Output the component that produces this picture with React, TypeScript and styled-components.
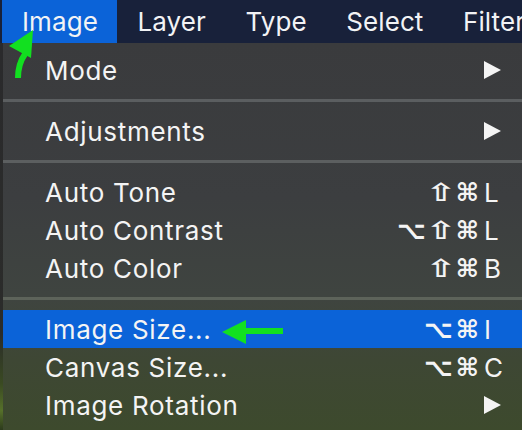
import React from "react";
import styled, { createGlobalStyle } from "styled-components";

const GlobalStyle = createGlobalStyle`
  html, body { margin: 0; padding: 0; background: #2a2a2a; }
  body { font-family: Inter, "Liberation Sans", sans-serif; }
`;

const Screen = styled.div`
  position: relative;
  width: 522px;
  height: 430px;
  overflow: hidden;
  display: flex;
  flex-direction: column;
  font-family: Inter, "Liberation Sans", sans-serif;
  color: #f4f4f4;
`;

const MenuBar = styled.div`
  height: 43px;
  flex: none;
  display: flex;
  padding-left: 2px;
  background: #18213a;
`;

const BarItem = styled.div<{ $active?: boolean }>`
  padding: 0 19.5px 0 20px;
  line-height: 43px;
  font-size: 26px;
  letter-spacing: 0.1px;
  white-space: nowrap;
  color: #f2f3f5;
  background: ${(p) => (p.$active ? "#0b63d8" : "transparent")};
`;

const Body = styled.div`
  flex: 1;
  display: flex;
`;

const EdgeStrip = styled.div`
  width: 3px;
  flex: none;
  background: linear-gradient(#2a2a2c 0%, #2b2c2a 75%, #3a4a22 88%, #56702a 95%, #2c3a1c 100%);
`;

const Menu = styled.div`
  flex: 1;
  padding-top: 8px;
  background: linear-gradient(
    #3a3b3d 0%,
    #3c3e40 40%,
    #3f4440 65%,
    #3e4734 82%,
    #3d4a2d 100%
  );
`;

const Row = styled.div<{ $highlight?: boolean }>`
  height: 38px;
  display: flex;
  align-items: center;
  justify-content: space-between;
  padding: 0 16px 0 42px;
  font-size: 26px;
  white-space: nowrap;
  background: ${(p) => (p.$highlight ? "#0b63d8" : "transparent")};
`;

const Label = styled.span`
  color: #f4f4f4;
  letter-spacing: 0.7px;
`;

const Shortcut = styled.span`
  display: flex;
  align-items: center;
`;

const Mods = styled.span`
  display: flex;
  gap: 3px;
  font-family: "DejaVu Sans", sans-serif;
  font-weight: bold;
  font-size: 25px;
  margin-right: 5px;
`;

const Mod = styled.span<{ $wide?: boolean }>`
  display: inline-block;
  width: ${(p) => (p.$wide ? "24px" : "auto")};
  text-align: center;
  transform: ${(p) => (p.$wide ? "scaleX(1.45)" : "none")};
`;

const Key = styled.span`
  width: 22px;
  display: flex;
  align-items: center;
  font-size: 26px;
`;

const Separator = styled.div<{ $tint?: string }>`
  height: 3px;
  margin: 10px 0;
  background: ${(p) => p.$tint ?? "#5c5f60"};
`;

const Annotation = styled.svg`
  position: absolute;
  left: 0;
  top: 0;
  pointer-events: none;
`;

const Chevron = () => (
  <svg width="18" height="18" viewBox="0 0 18 18">
    <polygon points="0,0 17,9 0,18" fill="#f4f4f4" />
  </svg>
);

type Item = {
  label: string;
  mods?: string[];
  keyChar?: string;
  submenu?: boolean;
  highlight?: boolean;
};

const groups: { items: Item[]; tint?: string }[] = [
  { items: [{ label: "Mode", submenu: true }], tint: "#5b5e60" },
  { items: [{ label: "Adjustments", submenu: true }], tint: "#5c5f60" },
  {
    items: [
      { label: "Auto Tone", mods: ["⇧", "⌘"], keyChar: "L" },
      { label: "Auto Contrast", mods: ["⌥", "⇧", "⌘"], keyChar: "L" },
      { label: "Auto Color", mods: ["⇧", "⌘"], keyChar: "B" },
    ],
    tint: "#5d635a",
  },
  {
    items: [
      { label: "Image Size...", mods: ["⌥", "⌘"], keyChar: "I", highlight: true },
      { label: "Canvas Size...", mods: ["⌥", "⌘"], keyChar: "C" },
      { label: "Image Rotation", submenu: true },
    ],
  },
];

export default function App() {
  return (
    <>
      <GlobalStyle />
      <Screen>
        <MenuBar>
          <BarItem $active>Image</BarItem>
          <BarItem>Layer</BarItem>
          <BarItem>Type</BarItem>
          <BarItem>Select</BarItem>
          <BarItem>Filter</BarItem>
        </MenuBar>
        <Body>
          <EdgeStrip />
          <Menu>
            {groups.map((g, gi) => (
              <React.Fragment key={gi}>
                {g.items.map((it) => (
                  <Row key={it.label} $highlight={it.highlight}>
                    <Label>{it.label}</Label>
                    <Shortcut>
                      {it.mods && (
                        <Mods>
                          {it.mods.map((m, i) => (
                            <Mod key={i} $wide={m === "⇧"}>
                              {m}
                            </Mod>
                          ))}
                        </Mods>
                      )}
                      <Key>{it.submenu ? <Chevron /> : it.keyChar}</Key>
                    </Shortcut>
                  </Row>
                ))}
                {gi < groups.length - 1 && <Separator $tint={g.tint} />}
              </React.Fragment>
            ))}
          </Menu>
        </Body>
        <Annotation width="522" height="430" viewBox="0 0 522 430">
          <path d="M18 78 Q18 64 25 54" stroke="#12e020" strokeWidth="6" fill="none" />
          <polygon points="33,30 9,46 31,58" fill="#12e020" />
          <rect x="244" y="328" width="39" height="6" fill="#12e020" />
          <polygon points="222,332 246,320 246,344" fill="#12e020" />
        </Annotation>
      </Screen>
    </>
  );
}
